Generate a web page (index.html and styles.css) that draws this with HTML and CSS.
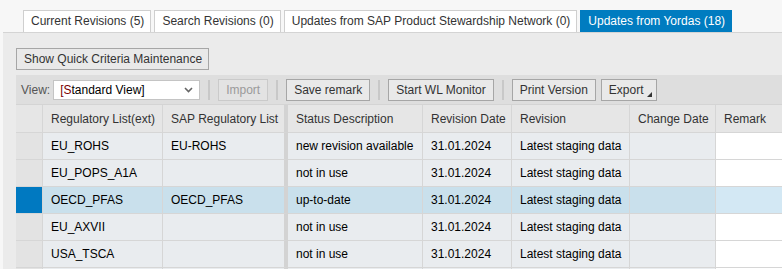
FILE: index.html
```html
<!DOCTYPE html>
<html>
<head>
<meta charset="utf-8">
<link rel="stylesheet" href="styles.css">
</head>
<body>
<div class="tabs">
  <div class="tab">Current Revisions (5)</div>
  <div class="tab">Search Revisions (0)</div>
  <div class="tab">Updates from SAP Product Stewardship Network (0)</div>
  <div class="tab active">Updates from Yordas (18)</div>
</div>
<div class="panel">
  <div class="qc-row"><button class="btn qc">Show Quick Criteria Maintenance</button></div>
  <div class="toolbar">
    <span class="view-label">View:</span>
    <div class="select">
      <span>[Standard View]</span>
      <svg class="chev" width="9" height="6" viewBox="0 0 9 6"><path d="M1 1 L4.5 4.5 L8 1" fill="none" stroke="#666" stroke-width="1.6"/></svg>
    </div>
    <span class="sep"></span>
    <button class="btn disabled">Import</button>
    <span class="sep"></span>
    <button class="btn">Save remark</button>
    <span class="sep"></span>
    <button class="btn">Start WL Monitor</button>
    <span class="sep"></span>
    <button class="btn">Print Version</button>
    <button class="btn export">Export<svg class="tri" width="5" height="5" viewBox="0 0 5 5"><polygon points="5,0 5,5 0,5" fill="#333"/></svg></button>
  </div>
  <div class="grid">
    <div class="row head">
      <div class="c sel"></div>
      <div class="c c1">Regulatory List(ext)</div>
      <div class="c c2">SAP Regulatory List</div>
      <div class="c c3">Status Description</div>
      <div class="c c4">Revision Date</div>
      <div class="c c5">Revision</div>
      <div class="c c6">Change Date</div>
      <div class="c c7">Remark</div>
    </div>
    <div class="row">
      <div class="c sel"></div>
      <div class="c c1">EU_ROHS</div>
      <div class="c c2">EU-ROHS</div>
      <div class="c c3">new revision available</div>
      <div class="c c4">31.01.2024</div>
      <div class="c c5">Latest staging data</div>
      <div class="c c6"></div>
      <div class="c c7"></div>
    </div>
    <div class="row">
      <div class="c sel"></div>
      <div class="c c1">EU_POPS_A1A</div>
      <div class="c c2"></div>
      <div class="c c3">not in use</div>
      <div class="c c4">31.01.2024</div>
      <div class="c c5">Latest staging data</div>
      <div class="c c6"></div>
      <div class="c c7"></div>
    </div>
    <div class="row selected">
      <div class="c sel"></div>
      <div class="c c1">OECD_PFAS</div>
      <div class="c c2">OECD_PFAS</div>
      <div class="c c3">up-to-date</div>
      <div class="c c4">31.01.2024</div>
      <div class="c c5">Latest staging data</div>
      <div class="c c6"></div>
      <div class="c c7"></div>
    </div>
    <div class="row">
      <div class="c sel"></div>
      <div class="c c1">EU_AXVII</div>
      <div class="c c2"></div>
      <div class="c c3">not in use</div>
      <div class="c c4">31.01.2024</div>
      <div class="c c5">Latest staging data</div>
      <div class="c c6"></div>
      <div class="c c7"></div>
    </div>
    <div class="row">
      <div class="c sel"></div>
      <div class="c c1">USA_TSCA</div>
      <div class="c c2"></div>
      <div class="c c3">not in use</div>
      <div class="c c4">31.01.2024</div>
      <div class="c c5">Latest staging data</div>
      <div class="c c6"></div>
      <div class="c c7"></div>
    </div>
    <div class="row">
      <div class="c sel"></div>
      <div class="c c1"></div>
      <div class="c c2"></div>
      <div class="c c3"></div>
      <div class="c c4"></div>
      <div class="c c5"></div>
      <div class="c c6"></div>
      <div class="c c7"></div>
    </div>
  </div>
</div>
</body>
</html>
```
FILE: styles.css
```css
html, body {
  margin: 0;
  padding: 0;
  height: 100%;
  overflow: hidden;
}
body {
  background: #f7f7f7;
  font-family: "Liberation Sans", Arial, sans-serif;
  font-size: 12px;
  color: #333;
}
.tabs {
  display: flex;
  gap: 3px;
  padding: 10px 0 0 23px;
  height: 22px;
}
.tab {
  box-sizing: border-box;
  height: 22px;
  line-height: 21px;
  padding: 0 6px 0 7px;
  background: #fff;
  border: 1px solid #cfcfcf;
  border-bottom: none;
  color: #333;
  white-space: nowrap;
}
.tab.active {
  background: #007cc0;
  border-color: #007cc0;
  color: #fff;
}
.panel {
  box-sizing: border-box;
  margin-left: 3px;
  border-top: 1px solid #d4d4d4;
  background: #ebebeb;
  padding: 15px 0 0 13px;
  height: calc(100% - 32px);
  overflow: hidden;
}
.qc-row {
  display: flex;
  height: 22px;
}
.btn {
  box-sizing: border-box;
  height: 22px;
  padding: 0 7px;
  border: 1px solid #a6a6a6;
  background: #e9e9e9;
  font-family: "Liberation Sans", Arial, sans-serif;
  font-size: 12px;
  color: #333;
  white-space: nowrap;
  display: flex;
  align-items: center;
}
.btn.qc {
  width: 193px;
}
.btn.disabled {
  color: #9a9a9a;
  border-color: #cacaca;
  background: #e3e3e3;
}
.toolbar {
  margin-top: 5px;
  background: #dedede;
  height: 29px;
  display: flex;
  align-items: center;
  padding-left: 5px;
}
.view-label {
  color: #555;
  margin-right: 3px;
}
.select {
  box-sizing: border-box;
  width: 147px;
  height: 20px;
  background: #fff;
  border: 1px solid #c4c4c4;
  display: flex;
  align-items: center;
  justify-content: space-between;
  padding: 0 6px 0 6px;
  color: #000;
}
.select span::first-letter {
  color: #7a0000;
}
.chev {
  display: block;
}
.sep {
  width: 2px;
  height: 20px;
  background: #c8c8c8;
  margin: 0 8px 0 8px;
}
.btn.export {
  margin-left: 5px;
  position: relative;
  padding-right: 12px;
}
.tri {
  position: absolute;
  right: 4px;
  bottom: 3px;
}
.grid {
  border-top: 1px solid #d4d4d4;
}
.row {
  display: flex;
  height: 27px;
}
.row.head {
  height: 28px;
}
.c {
  box-sizing: border-box;
  height: 100%;
  border-right: 1px solid #d6d6d6;
  border-bottom: 1px solid #d6d6d6;
  padding-left: 8px;
  display: flex;
  align-items: center;
  white-space: nowrap;
  overflow: hidden;
  background: #e9ecef;
  color: #000;
  flex: none;
}
.head .c {
  background: #e6e6e6;
  color: #333;
}
.sel { width: 27px; background: #e3e3e3; padding: 0; }
.c1 { width: 120px; }
.c2 { width: 125px; border-right: 4px solid #d3d3d3; }
.c3 { width: 135px; }
.c4 { width: 89px; }
.c5 { width: 118px; }
.c6 { width: 86px; }
.c7 { width: 80px; background: #fff; }
.head .c7 { background: #e6e6e6; }
.selected .c { background: #c9e0ec; }
.selected .sel { background: #0079c1; }
.selected .c7 { background: #d3e8f4; }
```
